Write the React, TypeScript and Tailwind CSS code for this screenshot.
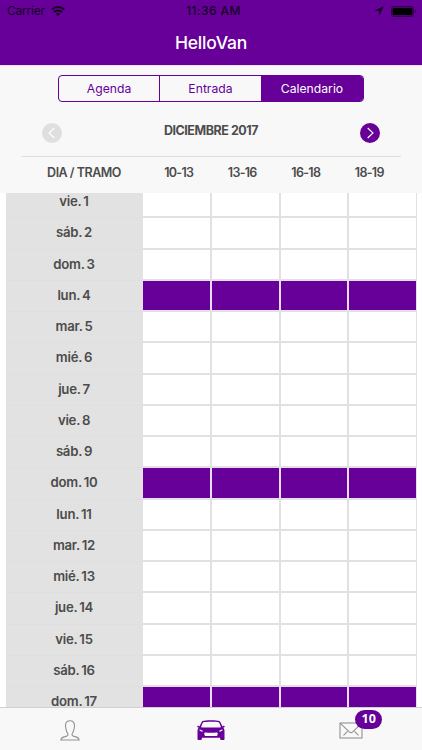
import clsx from 'clsx';

interface Day {
  label: string;
  booked?: boolean;
}

const tabs = ['Agenda', 'Entrada', 'Calendario'];
const slots = ['10-13', '13-16', '16-18', '18-19'];

const days: Day[] = [
  { label: 'vie. 1' },
  { label: 'sáb. 2' },
  { label: 'dom. 3' },
  { label: 'lun. 4', booked: true },
  { label: 'mar. 5' },
  { label: 'mié. 6' },
  { label: 'jue. 7' },
  { label: 'vie. 8' },
  { label: 'sáb. 9' },
  { label: 'dom. 10', booked: true },
  { label: 'lun. 11' },
  { label: 'mar. 12' },
  { label: 'mié. 13' },
  { label: 'jue. 14' },
  { label: 'vie. 15' },
  { label: 'sáb. 16' },
  { label: 'dom. 17', booked: true },
];

function StatusBar() {
  return (
    <div className="grid h-[22px] grid-cols-3 items-center px-[7px] text-[12px] leading-none text-[#15001f]">
      <div className="flex items-center gap-[6px]">
        <span className="w-[38px] tracking-[-0.2px]">Carrier</span>
        <svg width="14" height="10" viewBox="0 0 14 10" fill="none" stroke="currentColor" strokeWidth="2">
          <path d="M0.8 3.6a8.9 8.9 0 0 1 12.4 0" />
          <path d="M3 6a5.8 5.8 0 0 1 8 0" />
          <path d="M4.8 7.8 7 10l2.2-2.2a3.1 3.1 0 0 0-4.4 0z" fill="currentColor" stroke="none" />
        </svg>
      </div>
      <span className="pl-[5px] text-center font-medium tracking-[0.4px]">11:36 AM</span>
      <div className="flex items-center justify-end gap-[7px]">
        <svg width="10" height="10" viewBox="0 0 10 10" fill="currentColor">
          <path d="M9.8 0.2 0.3 4.8h4.9v4.9z" />
        </svg>
        <svg width="26" height="11" viewBox="0 0 26 11" className="-mr-[2px]">
          <rect x="0.5" y="0.5" width="22" height="10" rx="2" fill="none" stroke="#33004d" />
          <rect x="1.5" y="1.7" width="20" height="7.6" rx="1" fill="#000" />
          <path d="M24 3.8v3.4c.8-.3 1.2-.9 1.2-1.7s-.4-1.4-1.2-1.7z" fill="#33004d" />
        </svg>
      </div>
    </div>
  );
}

function ArrowButton({ next = false }: { next?: boolean }) {
  return (
    <button className={clsx('flex size-5 items-center justify-center rounded-full', next ? 'bg-[#660099]' : 'bg-[#dfdfdf]')}>
      <svg width="20" height="20" viewBox="0 0 20 20" fill="none" stroke="#fff" strokeWidth="1.1">
        <path d={next ? 'M7.7 5 13 10l-5.3 5' : 'M12.3 5 7 10l5.3 5'} />
      </svg>
    </button>
  );
}

function DayRow({ day }: { day: Day }) {
  return (
    <div className="grid h-[31.25px] grid-cols-[137px_1fr] text-[13.2px] font-semibold text-[#4c4c4c]">
      <div className="flex items-center justify-center border-b border-[#dfdfdf] bg-[#e2e2e2] pr-px tracking-[-0.25px] [word-spacing:-1px]">
        {day.label}
      </div>
      <div className="grid grid-cols-4 gap-[2px] bg-[#e1e1e1] pr-px pb-[2px]">
        {slots.map((slot) => (
          <div
            key={slot}
            className={clsx(day.booked ? 'bg-[#660099] shadow-[0_0_0_1px_#eadcf3]' : 'bg-white')}
          />
        ))}
      </div>
    </div>
  );
}

function TabBar() {
  return (
    <nav className="grid h-[43px] grid-cols-3 border-t border-[#d0d0d0] bg-[#f8f8f8]">
      <div className="flex items-start justify-center pt-[12px]">
        <svg width="20" height="21" viewBox="0 0 20 21" fill="none" stroke="#929292" strokeWidth="1.1">
          <path d="M.9 20c.2-2 1.2-2.7 3.2-3.1 2.600-.5 3.900-.7 3.900-2.100 0-1.500-.8-1.900-1.400-3.500C5.700 9 5.400 7.400 5.500 5.100 5.700 2 7.400.8 10 .8s4.300 1.200 4.500 4.300c.1 2.300-.2 3.900-1.100 6.200-.6 1.600-1.400 2-1.400 3.500 0 1.400 1.300 1.600 3.900 2.100 2 .4 3 1.100 3.200 3.100z" />
        </svg>
      </div>
      <div className="flex items-start justify-center pt-[12px]">
        <svg width="28" height="21" viewBox="0 0 28 21" fill="#660099">
          <path
            fillRule="evenodd"
            d="M5.600 1.100C8 .1 20 .1 22.400 1.100c1 .6 2.200 3.500 3 5.300.3-.8 2.300-.7 2.300.2 0 .7-.6 1-1.500 1 .9 1 1.300 2.100 1.300 3.700v7.600c0 .8-.4 1.100-1.100 1.100h-2c-.8 0-1.100-.4-1.200-1.200l-.2-1H5l-.2 1c-.1.8-.4 1.200-1.200 1.200h-2c-.7 0-1.100-.3-1.100-1.100v-7.600c0-1.600.4-2.700 1.300-3.700-.9 0-1.500-.3-1.500-1 0-.9 2-1 2.300-.2.800-1.800 2-4.700 3-5.300zM6.200 2.200C5.400 3.200 4.500 5.500 4 7.200c3.600.5 16.400.5 20 0-.5-1.700-1.400-4-2.200-5-2.200-.7-13.400-.7-15.600 0zM2.300 9.600c.2 1.400 1.200 2 3.900 2-.4-1.100-1.900-1.700-3.900-2zm23.400 0c-2 .3-3.500.9-3.900 2 2.700 0 3.700-.6 3.900-2zM7.800 12.500c-.9.4-.6 3 .4 3.400h11.600c1-.4 1.300-3 .4-3.400-3 .3-9.400.3-12.400 0z"
          />
        </svg>
      </div>
      <div className="flex items-start justify-center pt-[14px] pr-px">
        <div className="relative">
          <svg width="24" height="17" viewBox="0 0 24 17" fill="none" stroke="#929292" strokeWidth="1.1">
            <rect x="1" y="1" width="22" height="15" />
            <path d="M1.2 1.2 10.3 9.8c1 .9 2.4.9 3.4 0l9.1-8.600M4.500 13.300l4-3.900M19.500 13.300l-4-3.900" />
          </svg>
          <span className="absolute -top-[12px] left-[16px] flex h-[19px] w-[27px] items-center justify-center rounded-full bg-[#660099] font-['Noto_Sans',sans-serif] text-[12.5px] font-bold text-white">
            10
          </span>
        </div>
      </div>
    </nav>
  );
}

export default function App() {
  return (
    <div className="flex h-[750px] w-[422px] flex-col overflow-hidden bg-white font-['Inter',sans-serif]">
      <header className="h-[65px] shrink-0 bg-[#660099]">
        <StatusBar />
        <h1 className="text-center text-[17.5px] leading-[42px] font-medium tracking-[-0.2px] text-white">HelloVan</h1>
      </header>

      <section className="h-[128px] shrink-0 border-t border-[#eee0f5] bg-[#f8f8f8] pt-[9px]">
        <div className="mx-auto grid h-[27px] w-[306px] grid-cols-[100px_102px_1fr] overflow-hidden rounded-[4px] border border-[#660099] text-[12.2px] text-[#660099]">
          {tabs.map((tab, i) => (
            <div
              key={tab}
              className={clsx(
                'flex items-center justify-center pt-[2px]',
                i === 1 && 'border-l border-[#660099]',
                i === 2 && 'bg-[#660099] text-white'
              )}
            >
              {tab}
            </div>
          ))}
        </div>

        <div className="mx-[21px] flex h-[55px] items-start justify-between border-b border-[#dedede] px-[21px] pt-[21px]">
          <ArrowButton />
          <span className="-mt-px text-[12.5px] leading-[18px] font-bold tracking-[-0.45px] text-[#4c4c4c]">
            DICIEMBRE 2017
          </span>
          <ArrowButton next />
        </div>

        <div className="flex h-[32px] items-center pl-[32px] text-center text-[12.5px] font-semibold text-[#4c4c4c]">
          <span className="w-[104px] tracking-[-0.5px]">DIA / TRAMO</span>
          <div className="grid grid-cols-[repeat(4,63.5px)] pl-[11px] tracking-[-0.7px]">
            {slots.map((slot) => (
              <span key={slot}>{slot}</span>
            ))}
          </div>
        </div>
      </section>

      {/* Calendar, scrolled a few pixels under the header */}
      <main className="min-h-0 flex-1 overflow-hidden pr-[5px] pl-[6px]">
        <div className="-mt-[6px]">
          {days.map((day) => (
            <DayRow key={day.label} day={day} />
          ))}
        </div>
      </main>

      <TabBar />
    </div>
  );
}
